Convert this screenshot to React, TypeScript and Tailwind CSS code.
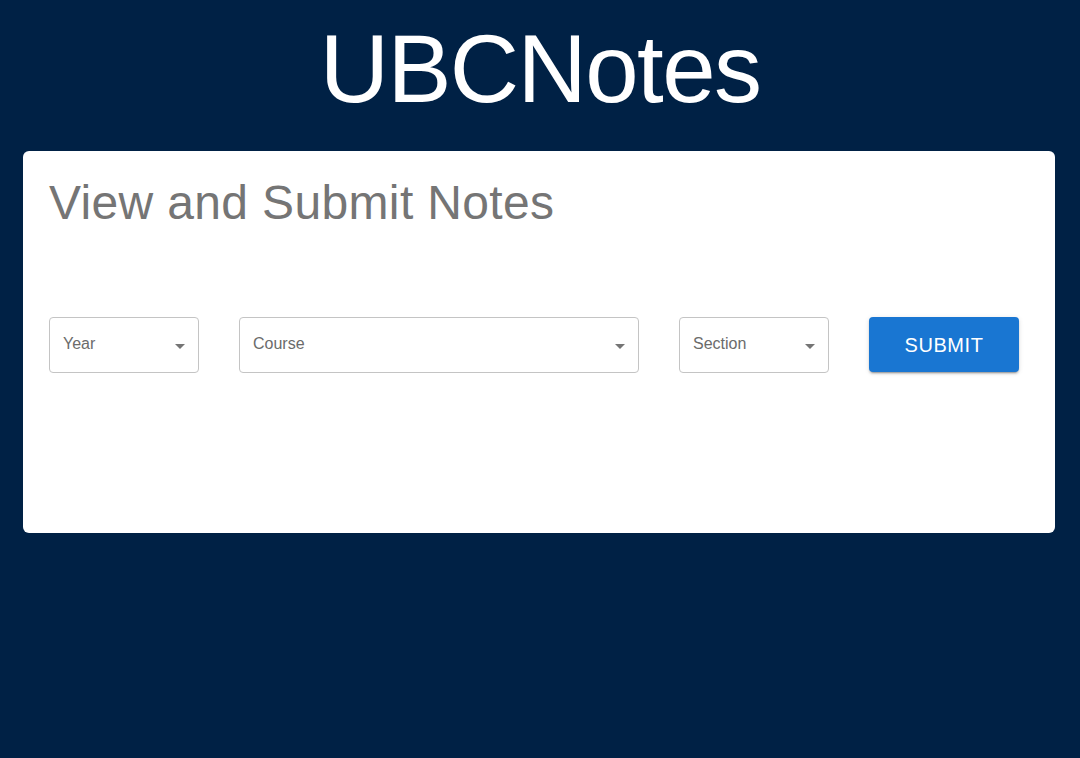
const font = { fontFamily: "'Liberation Sans', Arial, Helvetica, sans-serif" };

function ArrowDrop() {
    return (
        <svg viewBox="0 0 24 24" className="absolute right-[6px] top-[16px] w-6 h-6 fill-[#757575]">
            <path d="M7 10l5 5 5-5z" />
        </svg>
    );
}

function SelectBox({ label, width }: { label: string; width: string }) {
    return (
        <div className={`relative h-14 ${width} rounded-[4px] border border-[#c4c4c4] bg-white`}>
            <span className="absolute left-[13px] top-[15px] text-base leading-[22px] text-[#6b6b6b]">
                {label}
            </span>
            <ArrowDrop />
        </div>
    );
}

export default function App() {
    return (
        <div className="min-h-[758px] w-full bg-[#002145] pt-[13px]" style={font}>
            <h1 className="text-center text-[96px] leading-[112px] tracking-[-1.6px] text-white">
                UBCNotes
            </h1>

            <div className="mt-[26px] ml-[23px] w-[1032px] h-[382px] rounded-[6px] bg-white pl-[26px] pt-[24px]">
                <h3 className="text-[48px] leading-[56px] tracking-[0.35px] text-[#757575]">View and Submit Notes</h3>

                <div className="mt-[86px] flex items-start gap-10">
                    <SelectBox label="Year" width="w-[150px]" />
                    <SelectBox label="Course" width="w-[400px]" />
                    <SelectBox label="Section" width="w-[150px]" />
                    <button className="h-[55px] w-[150px] rounded-[4px] bg-[#1976d2] text-[20px] tracking-[0.57px] text-white shadow-[0_3px_1px_-2px_rgba(0,0,0,0.2),0_2px_2px_0_rgba(0,0,0,0.14),0_1px_5px_0_rgba(0,0,0,0.12)]">
                        SUBMIT
                    </button>
                </div>
            </div>
        </div>
    );
}
